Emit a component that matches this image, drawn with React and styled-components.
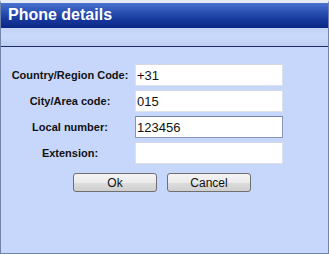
import React from 'react';
import styled, { createGlobalStyle } from 'styled-components';

const GlobalStyle = createGlobalStyle`
  html, body {
    margin: 0;
    padding: 0;
    background: #ffffff;
  }
  * {
    box-sizing: border-box;
  }
`;

// ============================================================
// Window frame
// ============================================================
const Window = styled.div`
  display: flex;
  flex-direction: column;
  width: 329px;
  height: 254px;
  border: 1px solid #6f84a8;
  border-top: 3px solid #e6ecf7;
  background-color: #c7d7fb;
  font-family: 'Liberation Sans', Arial, sans-serif;
`;

const TitleBar = styled.div`
  display: flex;
  align-items: center;
  height: 25px;
  padding: 0 0 1px 7px;
  background: linear-gradient(to bottom, #4c72cf 0%, #2c52b4 35%, #15369a 70%, #0b2784 100%);
`;

const Title = styled.h1`
  margin: 0;
  font-size: 16px;
  font-weight: 700;
  color: #ffffff;
  letter-spacing: 0;
`;

const SubBand = styled.div`
  height: 19px;
  background: linear-gradient(to bottom, #c3d3f6 0%, #c9d9fa 50%, #bcceF2 100%);
  border-bottom: 1px solid #1b2b6c;
`;

// ============================================================
// Form
// ============================================================
const Body = styled.div`
  display: flex;
  flex-direction: column;
  flex: 1;
  padding: 17px 0 0 9px;
`;

const Form = styled.div`
  display: grid;
  grid-template-columns: 120px 148px;
  column-gap: 5px;
  row-gap: 4px;
`;

const Label = styled.label`
  display: flex;
  align-items: center;
  justify-content: center;
  height: 22px;
  font-size: 11px;
  font-weight: 700;
  color: #111111;
  white-space: nowrap;
`;

const Field = styled.input`
  width: 148px;
  height: 22px;
  margin: 0;
  padding: 0 0 0 1px;
  border: 1px solid ${p => (p.$focused ? '#8796b4' : '#dde1e8')};
  border-top-color: ${p => (p.$focused ? '#7182a6' : '#d3d8e2')};
  background: #ffffff;
  font-family: 'Liberation Sans', Arial, sans-serif;
  font-size: 13px;
  color: #111111;
  outline: none;
`;

// ============================================================
// Buttons
// ============================================================
const ButtonRow = styled.div`
  display: flex;
  justify-content: center;
  gap: 10px;
  margin: 9px 0 0 -9px;
  padding-right: 5px;
`;

const Button = styled.button`
  width: 84px;
  height: 19px;
  padding: 0;
  border: 1px solid #707070;
  border-radius: 3px;
  background: linear-gradient(to bottom, #f4f4f4 0%, #ebebeb 50%, #dcdcdc 51%, #cfcfcf 100%);
  font-family: 'Liberation Sans', Arial, sans-serif;
  font-size: 12px;
  color: #111111;
`;

const rows = [
  { label: 'Country/Region Code:', value: '+31' },
  { label: 'City/Area code:', value: '015' },
  { label: 'Local number:', value: '123456', focused: true },
  { label: 'Extension:', value: '' },
];

export default function App() {
  return (
    <>
      <GlobalStyle />
      <Window>
        <TitleBar>
          <Title>Phone details</Title>
        </TitleBar>
        <SubBand />
        <Body>
          <Form>
            {rows.map(row => (
              <React.Fragment key={row.label}>
                <Label>{row.label}</Label>
                <Field readOnly value={row.value} $focused={row.focused} />
              </React.Fragment>
            ))}
          </Form>
          <ButtonRow>
            <Button>Ok</Button>
            <Button>Cancel</Button>
          </ButtonRow>
        </Body>
      </Window>
    </>
  );
}
